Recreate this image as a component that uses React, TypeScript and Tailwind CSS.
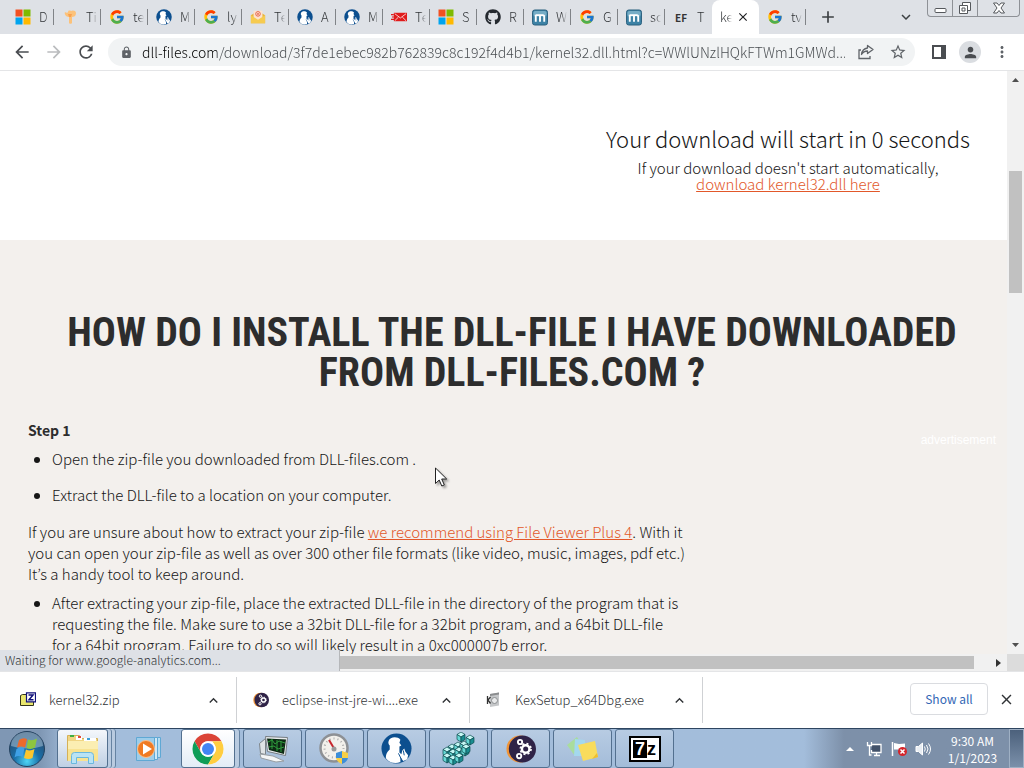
import { JSX } from "react";
import { FcGoogle } from "react-icons/fc";
import { FaGithub } from "react-icons/fa";
import {
  MdAdd,
  MdArrowBack,
  MdArrowForward,
  MdClose,
  MdExpandLess,
  MdExpandMore,
  MdLock,
  MdMoreVert,
  MdPerson,
  MdRefresh,
  MdStarBorder,
} from "react-icons/md";

const MicrosoftIcon = () => (
  <svg width="16" height="16" viewBox="0 0 16 16">
    <path fill="#f25022" d="M0.5 0.5h7v7h-7z" />
    <path fill="#7fba00" d="M8.5 0.5h7v7h-7z" />
    <path fill="#00a4ef" d="M0.5 8.5h7v7h-7z" />
    <path fill="#ffb900" d="M8.5 8.5h7v7h-7z" />
  </svg>
);

const TorchIcon = () => (
  <svg width="16" height="16" viewBox="0 0 16 16">
    <path fill="#fcc27a" d="M3 3c1 1 3 1 3 0 0-1 1-2 3-1 1-1 5-1 5 2s-2 4-4 4v6c0 1-3 1-3 0V8C4 8 2 5 3 3z" />
    <path fill="#f9a150" d="M6 5h4l-1 3H7z" />
  </svg>
);

const ThinkerIcon = ({ size = 16 }: { size?: number }) => (
  <svg width={size} height={size} viewBox="0 0 32 32">
    <circle cx="16" cy="16" r="15.5" fill="#0c4f8f" />
    <path
      fill="#fff"
      d="M8 8c1-4 9-5 12-1l-1 3 2 3-2 1v6l2 2 1-4 2-2 1 3 3 4-1 4-4 2-3-4 0 5c-5 2-11 1-15-4 0-5 2-7 4-9V13c-1-1-2-3-1-5z"
    />
    <path stroke="#0c4f8f" strokeWidth="1" fill="none" d="M18 21l3 6M23 18l1 5" />
  </svg>
);

const MailIcon = () => (
  <svg width="18" height="18" viewBox="0 0 18 18">
    <path fill="#e8b53c" d="M1 7l8-5 8 5v9H1z" />
    <path fill="#fde3cf" d="M4 2h10v8l-5 4-5-4z" />
    <path fill="#f6cb50" d="M1 7l8 5 8-5v9H1z" />
    <circle cx="9" cy="5.5" r="2.6" fill="none" stroke="#e4573d" strokeWidth="1" />
    <circle cx="9" cy="5.5" r="1" fill="#e4573d" />
  </svg>
);

const RedMailIcon = () => (
  <svg width="17" height="16" viewBox="0 0 17 16">
    <path fill="#e01b1b" d="M3 3.5h14v9H3z" />
    <path fill="none" stroke="#fff" strokeWidth="0.8" d="M4 4.5l6 4.500 6-4.500M4 12l4-4M16 12l-4-4" />
    <path stroke="#e01b1b" strokeWidth="1.2" d="M0 5.500h3M1 8h3M0 10.500h4" />
  </svg>
);

const MIcon = () => (
  <svg width="17" height="17" viewBox="0 0 17 17">
    <rect x="0.5" y="0.5" width="16" height="16" rx="2.5" fill="#3d82a5" stroke="#285d7c" />
    <rect x="1.5" y="1.5" width="14" height="6" rx="2" fill="#76adc6" />
    <path fill="none" stroke="#fff" strokeWidth="2" d="M4 13V5.500M4 6h7.500q1.500 0 1.500 2v5M8.500 6v7" />
  </svg>
);

const tabs: { icon: JSX.Element; title: string }[] = [
  { icon: <MicrosoftIcon />, title: "D" },
  { icon: <TorchIcon />, title: "Ti" },
  { icon: <FcGoogle size={16} />, title: "te" },
  { icon: <ThinkerIcon />, title: "M" },
  { icon: <FcGoogle size={16} />, title: "ly" },
  { icon: <MailIcon />, title: "Te" },
  { icon: <ThinkerIcon />, title: "A" },
  { icon: <ThinkerIcon />, title: "M" },
  { icon: <RedMailIcon />, title: "Te" },
  { icon: <MicrosoftIcon />, title: "S" },
  { icon: <FaGithub size={16} className="text-[#24292f]" />, title: "R" },
  { icon: <MIcon />, title: "W" },
  { icon: <FcGoogle size={16} />, title: "G" },
  { icon: <MIcon />, title: "so" },
  {
    icon: <span className="text-[10px] font-bold text-[#333]">EF</span>,
    title: "T",
  },
];

const Tab = ({ icon, title, last }: { icon: JSX.Element; title: string; last?: boolean }) => (
  <button
    className={
      "flex h-4 w-[47px] shrink-0 items-center gap-2 self-center pl-2 text-[#303336] " +
      (last ? "" : "border-r border-[#808387]")
    }
  >
    <span className="flex h-4 w-4 shrink-0 items-center justify-center">{icon}</span>
    <span className="w-[11px] shrink-0 overflow-hidden text-left whitespace-nowrap [mask-image:linear-gradient(to_right,black_50%,transparent)]">
      {title}
    </span>
  </button>
);

const TabStrip = () => (
  <div className="flex h-[34px] shrink-0 bg-[#dee1e6] pl-[7px]">
    {tabs.map((t, i) => (
      <Tab key={i} {...t} last={i === tabs.length - 1} />
    ))}
    <button className="flex w-[47px] shrink-0 items-center gap-1 rounded-t-lg bg-white pl-2 text-[#303336]">
      <span className="w-[12px] shrink-0 overflow-hidden text-left whitespace-nowrap [mask-image:linear-gradient(to_right,black_60%,transparent)]">
        ke
      </span>
      <MdClose size={14} className="shrink-0 text-[#202124]" />
    </button>
    <Tab icon={<FcGoogle size={16} />} title="tv" />
    <button aria-label="New tab" className="px-3">
      <MdAdd size={20} className="text-[#3c4043]" />
    </button>
    <button aria-label="Search tabs" className="ml-auto px-2">
      <MdExpandMore size={18} className="text-[#3c4043]" />
    </button>
    <WindowControls />
  </div>
);

const WindowControls = () => (
  <div className="mr-1 ml-1 flex h-[17px] w-[93px] divide-x divide-[#8e9196] rounded-b border border-t-0 border-[#8e9196]">
    <button aria-label="Minimize" className="flex w-[25px] items-center justify-center">
      <svg width="13" height="16" viewBox="0 0 13 16">
        <rect x="1" y="8.5" width="11" height="4" rx="1" fill="#fff" stroke="#55585c" />
      </svg>
    </button>
    <button aria-label="Restore" className="flex w-[25px] items-center justify-center">
      <svg width="14" height="16" viewBox="0 0 14 16" fill="#fff" stroke="#55585c">
        <path d="M4.500 2.500h8v8h-8z" />
        <path d="M1.500 5.500h8v8h-8z" />
        <path d="M4 8h3v3H4z" />
      </svg>
    </button>
    <button aria-label="Close" className="flex flex-1 items-center justify-center">
      <svg width="14" height="14" viewBox="0 0 14 14">
        <path
          fill="#fff"
          stroke="#55585c"
          d="M1.500 2h3.500l2 2.500L9 2h3.500L9 7l3.500 5H9L7 9.500 5 12H1.500L5 7z"
        />
      </svg>
    </button>
  </div>
);

const Toolbar = () => (
  <div className="flex h-[37px] shrink-0 items-center border-b border-[#e4e5e7] bg-white pr-[13px] pl-3 text-[#5f6368]">
    <button aria-label="Back" className="mr-3">
      <MdArrowBack size={20} className="text-[#4a4d51]" />
    </button>
    <button aria-label="Forward" className="mr-3">
      <MdArrowForward size={20} className="text-[#babcbe]" />
    </button>
    <button aria-label="Reload" className="mr-3">
      <MdRefresh size={20} className="text-[#4a4d51]" />
    </button>
    <div className="flex h-7 flex-1 items-center rounded-full bg-[#f1f3f4] pr-2 pl-3">
      <MdLock size={13} className="mr-[9px] shrink-0" />
      <input
        aria-label="Address"
        readOnly
        className="min-w-0 flex-1 bg-linear-to-r from-black from-[75px] to-[#44484c] to-[75px] bg-clip-text text-[14px] text-transparent outline-none"
        value="dll-files.com/download/3f7de1ebec982b762839c8c192f4d4b1/kernel32.dll.html?c=WWlUNzlHQkFTWm1GMWd..."
      />
      <button aria-label="Share" className="mr-[14px] ml-3">
        <svg width="18" height="16" viewBox="0 0 18 16" fill="none" stroke="#5f6368" strokeWidth="1.3">
          <path d="M4 6H2v8.500h11V12" />
          <path d="M10.500 1.500l5.500 4-5.500 4V7C8 7 6 8 4.500 10.500 5 6.500 7 4.500 10.500 4z" strokeLinejoin="round" />
        </svg>
      </button>
      <button aria-label="Bookmark">
        <MdStarBorder size={18} />
      </button>
    </div>
    <button aria-label="Side panel" className="mr-3 ml-4">
      <svg width="16" height="14" viewBox="0 0 16 14">
        <path fill="none" stroke="#4a4d51" strokeWidth="2" d="M2 1h12v12H2z" />
        <path fill="#4a4d51" d="M10 1h4v12h-4z" />
      </svg>
    </button>
    <button
      aria-label="Profile"
      className="mr-3 flex h-[22px] w-[22px] items-center justify-center rounded-full bg-[#dadde1]"
    >
      <MdPerson size={17} className="text-[#4a4d51]" />
    </button>
    <button aria-label="Menu">
      <MdMoreVert size={18} />
    </button>
  </div>
);

const Article = () => (
  <div className="min-w-[1024px] text-[#161616]">
    <div className="flex h-[169px] justify-end bg-white pt-[53px] pr-4">
      <div className="w-[440px] text-center text-[15px] leading-4">
        <h2 className="mb-2 text-[22px] leading-7">Your download will start in 0 seconds</h2>
        <p>If your download doesn't start automatically,</p>
        <a href="#" className="text-[#e2582a] underline">
          download kernel32.dll here
        </a>
      </div>
    </div>
    <div className="bg-[#f3f0ed] px-7 pt-[73px] pb-20 text-[15px] leading-[21px]">
      <h1 className="mb-[27px] text-center font-['Roboto_Condensed','Liberation_Sans_Narrow',sans-serif] text-[40px] leading-10 font-bold text-[#2d2d2d] uppercase">
        How do I install the dll-file I have downloaded
        <br />
        from DLL-files.com ?
      </h1>
      <div className="flex justify-between">
        <div className="w-[657px]">
          <h3 className="mb-[7px] text-[14px] font-bold text-[#2d2d2d]">Step 1</h3>
          <ul className="mb-4 flex list-disc flex-col gap-[15px] pl-6">
            <li>Open the zip-file you downloaded from DLL-files.com .</li>
            <li>Extract the DLL-file to a location on your computer.</li>
          </ul>
          <p className="mb-2">
            If you are unsure about how to extract your zip-file{" "}
            <a href="#" className="text-[#e2582a] underline">
              we recommend using File Viewer Plus 4
            </a>
            . With it you can open your zip-file as well as over 300 other file formats (like video,
            music, images, pdf etc.) It’s a handy tool to keep around.
          </p>
          <ul className="list-disc pr-1 pl-6">
            <li>
              After extracting your zip-file, place the extracted DLL-file in the directory of the
              program that is requesting the file. Make sure to use a 32bit DLL-file for a 32bit
              program, and a 64bit DLL-file for a 64bit program. Failure to do so will likely result
              in a 0xc000007b error.
            </li>
          </ul>
        </div>
        <aside className="pt-[10px] font-['Liberation_Sans',sans-serif] text-[12px] font-normal text-white">
          advertisement
        </aside>
      </div>
    </div>
  </div>
);

const Cursor = () => (
  <svg
    className="absolute top-[396px] left-[435px] drop-shadow-[2px_2px_1px_rgba(0,0,0,0.35)]"
    width="14"
    height="21"
    viewBox="0 0 14 21"
  >
    <path
      fill="#fff"
      stroke="#222"
      d="M0.500 1v15.500l3.700-3.500 2.600 6 2.500-1.100-2.600-5.900h5z"
      strokeLinejoin="round"
    />
  </svg>
);

const Page = () => (
  <div className="relative flex min-h-0 flex-1 flex-col bg-[#f1f1f1]">
    <div className="flex min-h-0 flex-1">
      <main className="min-w-0 flex-1 overflow-hidden bg-[#f3f0ed]">
        <Article />
      </main>
      <div className="flex w-[17px] shrink-0 flex-col items-center pt-[7px] pb-[7px]">
        <svg width="7" height="4" viewBox="0 0 7 4">
          <path fill="#505050" d="M0 4l3.500-4L7 4z" />
        </svg>
        <div className="mt-[89px] h-[122px] w-[13px] bg-[#c1c1c1]" />
        <svg width="7" height="4" viewBox="0 0 7 4" className="mt-auto">
          <path fill="#505050" d="M0 0l3.500 4L7 0z" />
        </svg>
      </div>
    </div>
    <div className="flex h-[17px] shrink-0 items-center">
      <div className="ml-[17px] h-[13px] flex-1 bg-[#c1c1c1]" />
      <svg width="5" height="8" viewBox="0 0 5 8" className="mr-[6px] ml-[22px]">
        <path fill="#333" d="M0 0l5 4-5 4z" />
      </svg>
      <div className="h-full w-[17px] bg-[#dcdcdc]" />
    </div>
    <div className="absolute bottom-0 left-0 h-[21px] w-[340px] border-r border-[#b5b7ba] bg-[#dee1e6] pl-[5px] text-[12px] leading-5 text-[#303336]">
      Waiting for www.google-analytics.com...
    </div>
    <Cursor />
  </div>
);

const ZipIcon = () => (
  <svg width="16" height="16" viewBox="0 0 16 16">
    <path fill="#e9e66d" stroke="#33331a" d="M0.500 3.500l2-1h4v2h7v9h-13z" />
    <path fill="#fff" stroke="#10107a" strokeWidth="1.2" d="M6.500 0.800h9v9h-9z" />
    <path fill="none" stroke="#10107a" strokeWidth="1.5" d="M8.500 3h4.500L9 7.800h4.500" />
  </svg>
);

const EclipseIcon = ({ size = 16 }: { size?: number }) => (
  <svg width={size} height={size} viewBox="0 0 32 32">
    <circle cx="15" cy="16" r="14.5" fill="#f09436" />
    <circle cx="17.5" cy="16" r="14.5" fill="#2f2347" />
    <circle cx="21" cy="16" r="4" fill="none" stroke="#fff" strokeWidth="2.6" />
    <circle cx="21" cy="16" r="5.7" fill="none" stroke="#fff" strokeWidth="1.8" strokeDasharray="2.2 2.3" />
    <circle cx="15" cy="8.5" r="2.3" fill="none" stroke="#fff" strokeWidth="2" />
    <circle cx="14" cy="23.5" r="2.3" fill="none" stroke="#fff" strokeWidth="2" />
  </svg>
);

const SetupIcon = () => (
  <svg width="16" height="16" viewBox="0 0 16 16">
    <path fill="#c5c7c9" d="M4 2l9-1.500v13L4 15z" />
    <path fill="#8b8d8f" d="M4 2l9-1.500v2L4 4z" />
    <circle cx="8.5" cy="8.5" r="3" fill="#e9eaeb" stroke="#8b8e90" />
    <path stroke="#333" strokeWidth="1.3" fill="none" d="M1.500 4v8M4.500 5L2 8l2.500 3.500" />
  </svg>
);

const downloads = [
  { icon: <ZipIcon />, name: "kernel32.zip" },
  { icon: <EclipseIcon />, name: "eclipse-inst-jre-wi....exe" },
  { icon: <SetupIcon />, name: "KexSetup_x64Dbg.exe" },
];

const DownloadBar = () => (
  <div className="flex h-[57px] shrink-0 items-center border-t border-[#e4e5e7] bg-white text-[#303336]">
    {downloads.map((d) => (
      <div
        key={d.name}
        className="flex h-[46px] w-[233px] items-center border-r border-[#cfd1d4] pr-[14px] pl-4 first:w-[237px] first:pl-5"
      >
        {d.icon}
        <span className="ml-[13px] flex-1">{d.name}</span>
        <button aria-label={`Options for ${d.name}`}>
          <MdExpandLess size={17} />
        </button>
      </div>
    ))}
    <button className="mb-[2px] ml-auto h-8 w-[78px] rounded border border-[#dadce0] text-[12px] font-normal text-[#3367b5]">
      Show all
    </button>
    <button aria-label="Close downloads" className="mb-[2px] mr-[9px] ml-[10px]">
      <MdClose size={17} />
    </button>
  </div>
);

const StartOrb = () => (
  <svg width="38" height="38" viewBox="0 0 38 38">
    <defs>
      <radialGradient id="orb" cx="50%" cy="85%" r="80%">
        <stop offset="0" stopColor="#4fd5f5" />
        <stop offset="0.45" stopColor="#1a6fa8" />
        <stop offset="1" stopColor="#2a4a6c" />
      </radialGradient>
    </defs>
    <circle cx="19" cy="19" r="17.5" fill="url(#orb)" stroke="#24425f" />
    <path fill="#9db9cf" opacity="0.6" d="M3 16a16 14 0 0 1 32 0q-16 5-32 0z" />
    <path fill="#ec6a2c" d="M11 10q4-3 8-1l-2 8.500q-4-2-8 0z" />
    <path fill="#8dc63f" d="M20 9.500q4 2 9-1l-2 9q-4 2.500-8.500 0.500z" />
    <path fill="#3fa0e6" d="M8.500 19q4-2.500 8-0.500L14.500 27q-4-2-8 0.500z" />
    <path fill="#fcc62d" d="M18 19.500q4 2 8.500-0.500l-2 9q-4 2-8.500 0z" />
  </svg>
);

const ExplorerIcon = () => (
  <svg width="34" height="32" viewBox="0 0 34 32">
    <path fill="#f0d583" stroke="#d5b057" d="M1.500 2.500h12v3h18v22h-30z" />
    <path fill="#fff" d="M10 3h6v4h-6zM18 5h12v4H18z" />
    <path stroke="#3fae3f" strokeWidth="2" d="M4 3h4" />
    <path stroke="#e0483c" strokeWidth="2" d="M12 4h3" />
    <path stroke="#3a9fd8" strokeWidth="2" d="M21 6h3" />
    <path fill="#fbeeb2" d="M2 8h30v20H2z" />
    <path fill="#f8e391" d="M2 16h30v12H2z" />
    <path fill="#b9e3f5" stroke="#6bb8dd" d="M5.500 30.500v-8q0-3 3-3h16q3 0 3 3v8h-5v-6h-12v6z" />
  </svg>
);

const MediaIcon = () => (
  <svg width="28" height="28" viewBox="0 0 28 28">
    <path fill="#b5ddf3" stroke="#5fa8d4" d="M8.500 2.500h17v20h-17z" />
    <path fill="#cfe8f6" stroke="#5fa8d4" d="M5.500 2.500h17v22h-17z" />
    <path fill="#9dcdea" stroke="#5fa8d4" d="M1.500 2.500h18v23h-18z" />
    <circle cx="11" cy="14" r="8.5" fill="#f07a22" stroke="#f9c08f" />
    <path fill="#fff" d="M8 8.500l9 5.500-9 5.500z" />
  </svg>
);

const ChromeIcon = () => (
  <svg width="34" height="34" viewBox="0 0 48 48">
    <circle cx="24" cy="24" r="22" fill="#fff" />
    <path fill="#db4437" d="M24 13h19A22 22 0 0 0 5 13l9.500 16.500A11 11 0 0 1 24 13z" />
    <path fill="#0f9d58" d="M5 13a22 22 0 0 0 19 33l9.500-16.500a11 11 0 0 1-19 0z" />
    <path fill="#ffcd40" d="M43 13a22 22 0 0 1-19 33l9.500-16.500A11 11 0 0 0 33.500 18.500L30 13z" />
    <circle cx="24" cy="24" r="11" fill="#fff" />
    <circle cx="24" cy="24" r="8.5" fill="#4285f4" />
  </svg>
);

const MonitorIcon = () => (
  <svg width="32" height="30" viewBox="0 0 32 30">
    <path fill="#dfe3e5" stroke="#7c8388" d="M2.500 9.500l6-5v16l-5-1z" />
    <path fill="#e9ecee" stroke="#777d82" d="M8.500 2.500l22 1-2 18-18-4z" />
    <path fill="#0d2a14" d="M10 4.500l19 1-2 14.500-15-4z" />
    <path stroke="#2f9c3d" strokeWidth="1" fill="none" d="M11 8l4-2 3 4 4-3 6 2M12 13l5-1 4 3 6-2M15 5v10M20 6v11M24 7v11" />
    <path fill="#f4f5f6" stroke="#999ea2" d="M3 20l13 2 11 5-8 1-15-4z" />
  </svg>
);

const GaugeIcon = () => (
  <svg width="32" height="34" viewBox="0 0 32 34">
    <circle cx="15" cy="16" r="13.5" fill="#f2f0eb" stroke="#8d9094" strokeWidth="2.5" />
    <circle cx="15" cy="16" r="9.5" fill="none" stroke="#aaa" strokeDasharray="1 3" strokeWidth="2" />
    <path stroke="#c8262c" strokeWidth="2" d="M10 8l6 10" />
    <circle cx="15" cy="17" r="2.5" fill="#999" />
    <path fill="#3d8ed8" d="M17 21l6-2v7h-6z" />
    <path fill="#f7cf46" d="M23 19l6 2v5h-6zM17 26h6v6q-5-2-6-6z" />
    <path fill="#3d8ed8" d="M23 26h6q-1 4-6 6z" />
  </svg>
);

// isometric cubes, one entry for each cube's top corner
const cubes = [
  [6, 12], [12, 10], [18, 9], [1, 15], [7, 17], [13, 15], [19, 14], [1, 21],
  [7, 23], [13, 21], [15, 0], [24, 3], [20, 12],
];

const RegistryIcon = () => (
  <svg width="34" height="34" viewBox="0 0 34 34">
    {cubes.map(([x, y]) => (
      <g key={`${x}-${y}`} transform={`translate(${x} ${y})`} stroke="#0d4a4e" strokeWidth="0.7">
        <path fill="#c5f7f4" d="M0 2.500L4 0l4 2.500L4 5z" />
        <path fill="#66d8d5" d="M0 2.500L4 5v5L0 7.500z" />
        <path fill="#1a8d90" d="M8 2.500L4 5v5l4-2.500z" />
      </g>
    ))}
  </svg>
);

const NotesIcon = () => (
  <svg width="34" height="28" viewBox="0 0 34 28">
    <path fill="#a9dd9d" d="M1 10L11 2l7 11-9 8z" />
    <path fill="#a4d8ee" d="M9 4l10 1v16H8z" />
    <path fill="#f9dc5c" d="M12 10l17-4 3 16-15 4z" />
    <path fill="#eebf2f" d="M26 24l6-2-1-4z" />
  </svg>
);

const SevenZipIcon = () => (
  <span className="flex h-[26px] w-8 items-center justify-center border-2 border-black bg-white font-['Liberation_Sans'] text-[18px] leading-none font-bold text-black">
    <span className="bg-black px-[2px] text-white">7</span>
    <span>z</span>
  </span>
);

const apps = [
  {
    name: "Explorer",
    icon: <ExplorerIcon />,
    className:
      "mr-2 w-[51px] bg-linear-to-b from-[#f4f7fb] to-[#bfd0e4] shadow-[3px_0_0_#b9cbe0,4px_0_0_#6683a2,7px_0_0_#b9cbe0,8px_0_0_#6683a2]",
  },
  { name: "Media Player", icon: <MediaIcon />, className: "w-[65px] border-transparent bg-none" },
  {
    name: "Chrome",
    icon: <ChromeIcon />,
    className:
      "mr-2 w-[54px] bg-linear-to-b from-white to-[#e3ecf6] shadow-[4px_0_0_#b9cbe0,5px_0_0_#6683a2]",
  },
  { name: "Monitor", icon: <MonitorIcon />, className: "mr-[3px] w-[59px]" },
  { name: "Tuner", icon: <GaugeIcon />, className: "mr-[3px] w-[59px]" },
  { name: "Thinker", icon: <ThinkerIcon size={31} />, className: "mr-[3px] w-[59px]" },
  { name: "Registry Editor", icon: <RegistryIcon />, className: "mr-[3px] w-[59px]" },
  { name: "Eclipse Installer", icon: <EclipseIcon size={30} />, className: "mr-[3px] w-[59px]" },
  { name: "Sticky Notes", icon: <NotesIcon />, className: "mr-[3px] w-[59px]" },
  { name: "7-Zip", icon: <SevenZipIcon />, className: "mr-[3px] w-[59px]" },
];

const Taskbar = () => (
  <div className="flex h-10 shrink-0 items-stretch border-t border-[#2e4560] bg-linear-to-r from-[#7f97b4] from-[40px] via-[#a3bddb] via-[70px] to-[#a3bddb]">
    <button aria-label="Start" className="flex w-[57px] items-center justify-center pr-1">
      <StartOrb />
    </button>
    {apps.map((a) => (
      <button
        key={a.name}
        aria-label={a.name}
        className={
          "flex shrink-0 items-center justify-center rounded-[3px] border border-[#53708f] bg-linear-to-b from-[#c5d5e8]/60 to-[#a4bcd8]/60 " +
          a.className
        }
      >
        {a.icon}
      </button>
    ))}
    <div className="ml-auto flex w-[220px] items-center bg-linear-to-r from-transparent to-[#7d90a9] to-[40px] pl-[42px] text-white">
      <svg width="8" height="5" viewBox="0 0 8 5">
        <path fill="#fff" d="M0 5l4-4 4 4z" />
      </svg>
      <svg width="17" height="16" viewBox="0 0 17 16" className="ml-3" fill="none" stroke="#fff" strokeWidth="1.3">
        <path d="M6 3.500h9v8H5.500V9" fill="#42526a" />
        <path d="M8 14.500h6M10.500 12v2M1.500 1v3.500h4V1M3.500 4.500V14h2" />
      </svg>
      <svg width="17" height="16" viewBox="0 0 17 16" className="ml-2">
        <path stroke="#fff" strokeWidth="1.5" d="M1.500 1v14" />
        <path fill="#fff" d="M3 2l5 1 6-0.500v6H3z" />
        <circle cx="11.5" cy="10.5" r="4.5" fill="#d5252b" />
        <path stroke="#fff" strokeWidth="1.5" d="M9.500 8.500l4 4M13.500 8.500l-4 4" />
      </svg>
      <svg width="17" height="16" viewBox="0 0 17 16" className="ml-[7px]" fill="none" stroke="#fff">
        <path fill="#e8edf3" d="M1 5.500h2.500L7.500 2v12l-4-3.500H1z" />
        <path d="M9.500 5.500q1.500 2.500 0 5M11.500 4q3 4 0 8M13.500 2.500q4 5.500 0 11" />
      </svg>
      <div className="flex-1 pl-1 text-center text-[12px] leading-[17px] font-normal">
        <div>9:30 AM</div>
        <div>1/1/2023</div>
      </div>
      <button
        aria-label="Show desktop"
        className="h-full w-[15px] border border-[#9fb0c4] bg-linear-to-b from-[#4c617c] to-[#7b90aa]"
      />
    </div>
  </div>
);

export default function App() {
  return (
    <div className="flex h-screen flex-col overflow-hidden font-['Noto_Sans_CJK_KR','Open_Sans',sans-serif] text-[13px] font-light">
      <TabStrip />
      <Toolbar />
      <Page />
      <DownloadBar />
      <Taskbar />
    </div>
  );
}
